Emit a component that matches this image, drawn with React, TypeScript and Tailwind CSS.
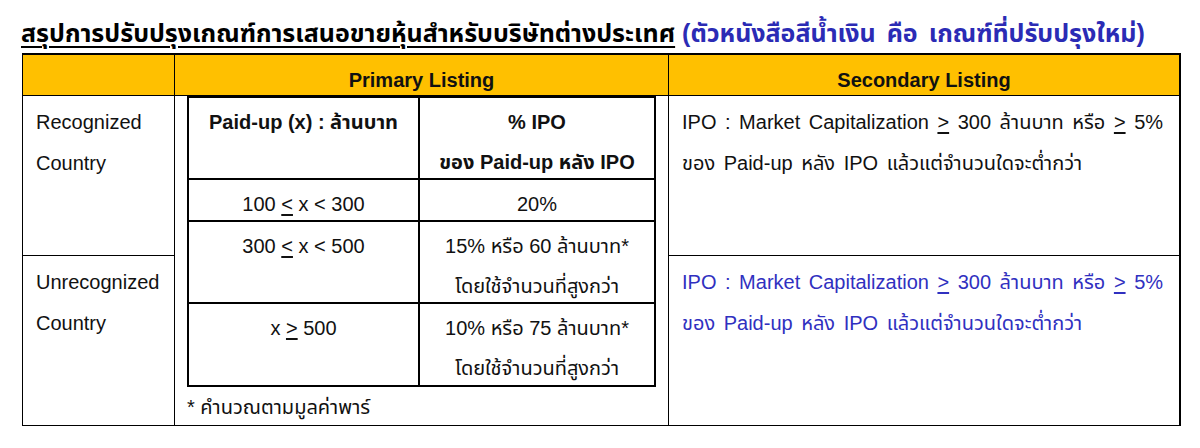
import React from "react";

const U = ({ c }: { c: string }) => (
  <span className="underline decoration-2 underline-offset-[3px]">{c}</span>
);

export default function App() {
  return (
    <div className="w-[1200px] h-[448px] bg-white overflow-hidden font-['Liberation_Sans','Noto_Sans_Thai',sans-serif] text-[#111111]">
      <div className="pl-[21px] pt-[18px] h-[53px] text-[25px] leading-[30px] font-bold whitespace-nowrap">
        <span className="underline decoration-2 underline-offset-[4px] text-black">
          สรุปการปรับปรุงเกณฑ์การเสนอขายหุ้นสำหรับบริษัทต่างประเทศ
        </span>{" "}
        <span className="text-[#2b2bb5] [word-spacing:4px]">(ตัวหนังสือสีน้ำเงิน คือ เกณฑ์ที่ปรับปรุงใหม่)</span>
      </div>

      <div className="ml-[22px] w-[1159px] grid grid-cols-[152px_494px_510px] grid-rows-[41px_160px_170px] border-t-2 border-l border-r-2 border-black text-[20px]">
        {/* header */}
        <div className="bg-[#FFC000] border-r border-b border-black" />
        <div className="bg-[#FFC000] border-r border-b border-black text-center font-bold pt-[5px] leading-[40px]">
          Primary Listing
        </div>
        <div className="bg-[#FFC000] border-b border-black text-center font-bold pt-[5px] leading-[40px]">
          Secondary Listing
        </div>

        {/* row 1 */}
        <div className="border-r border-b border-black pl-[13px] pt-[6px] leading-[41px]">
          Recognized
          <br />
          Country
        </div>
        <div className="row-span-2 border-r border-b border-black pl-[12px]">
          <div className="w-[469px] grid grid-cols-[231px_234px] grid-rows-[82px_42px_82px_83px] border-t-2 border-l-2 border-r-2 border-black text-center leading-[40px]">
            <div className="border-r-2 border-b-2 border-black pt-[4px] font-bold">Paid-up (x) : ล้านบาท</div>
            <div className="border-b-2 border-black pt-[4px] font-bold">
              % IPO
              <br />
              ของ Paid-up หลัง IPO
            </div>

            <div className="border-r-2 border-b-2 border-black pt-[4px]">
              100 <U c="<" /> x &lt; 300
            </div>
            <div className="border-b-2 border-black pt-[4px]">20%</div>

            <div className="border-r-2 border-b-2 border-black pt-[4px]">
              300 <U c="<" /> x &lt; 500
            </div>
            <div className="border-b-2 border-black pt-[4px]">
              15% หรือ 60 ล้านบาท*
              <br />
              โดยใช้จำนวนที่สูงกว่า
            </div>

            <div className="border-r-2 border-b-2 border-black pt-[4px]">
              x <U c=">" /> 500
            </div>
            <div className="border-b-2 border-black pt-[4px]">
              10% หรือ 75 ล้านบาท*
              <br />
              โดยใช้จำนวนที่สูงกว่า
            </div>
          </div>
          <div className="leading-[40px] whitespace-nowrap">* คำนวณตามมูลค่าพาร์</div>
        </div>
        <div className="border-b border-black pl-[13px] pt-[6px] leading-[41px] whitespace-nowrap [word-spacing:3px]">
          IPO : Market Capitalization <U c=">" /> 300 ล้านบาท หรือ <U c=">" /> 5%
          <br />
          ของ Paid-up หลัง IPO แล้วแต่จำนวนใดจะต่ำกว่า
        </div>

        {/* row 2 */}
        <div className="border-r border-b border-black pl-[13px] pt-[6px] leading-[41px]">
          Unrecognized
          <br />
          Country
        </div>
        <div className="border-b border-black pl-[13px] pt-[6px] leading-[41px] whitespace-nowrap [word-spacing:3px] text-[#3030c0]">
          IPO : Market Capitalization <U c=">" /> 300 ล้านบาท หรือ <U c=">" /> 5%
          <br />
          ของ Paid-up หลัง IPO แล้วแต่จำนวนใดจะต่ำกว่า
        </div>
      </div>
    </div>
  );
}
